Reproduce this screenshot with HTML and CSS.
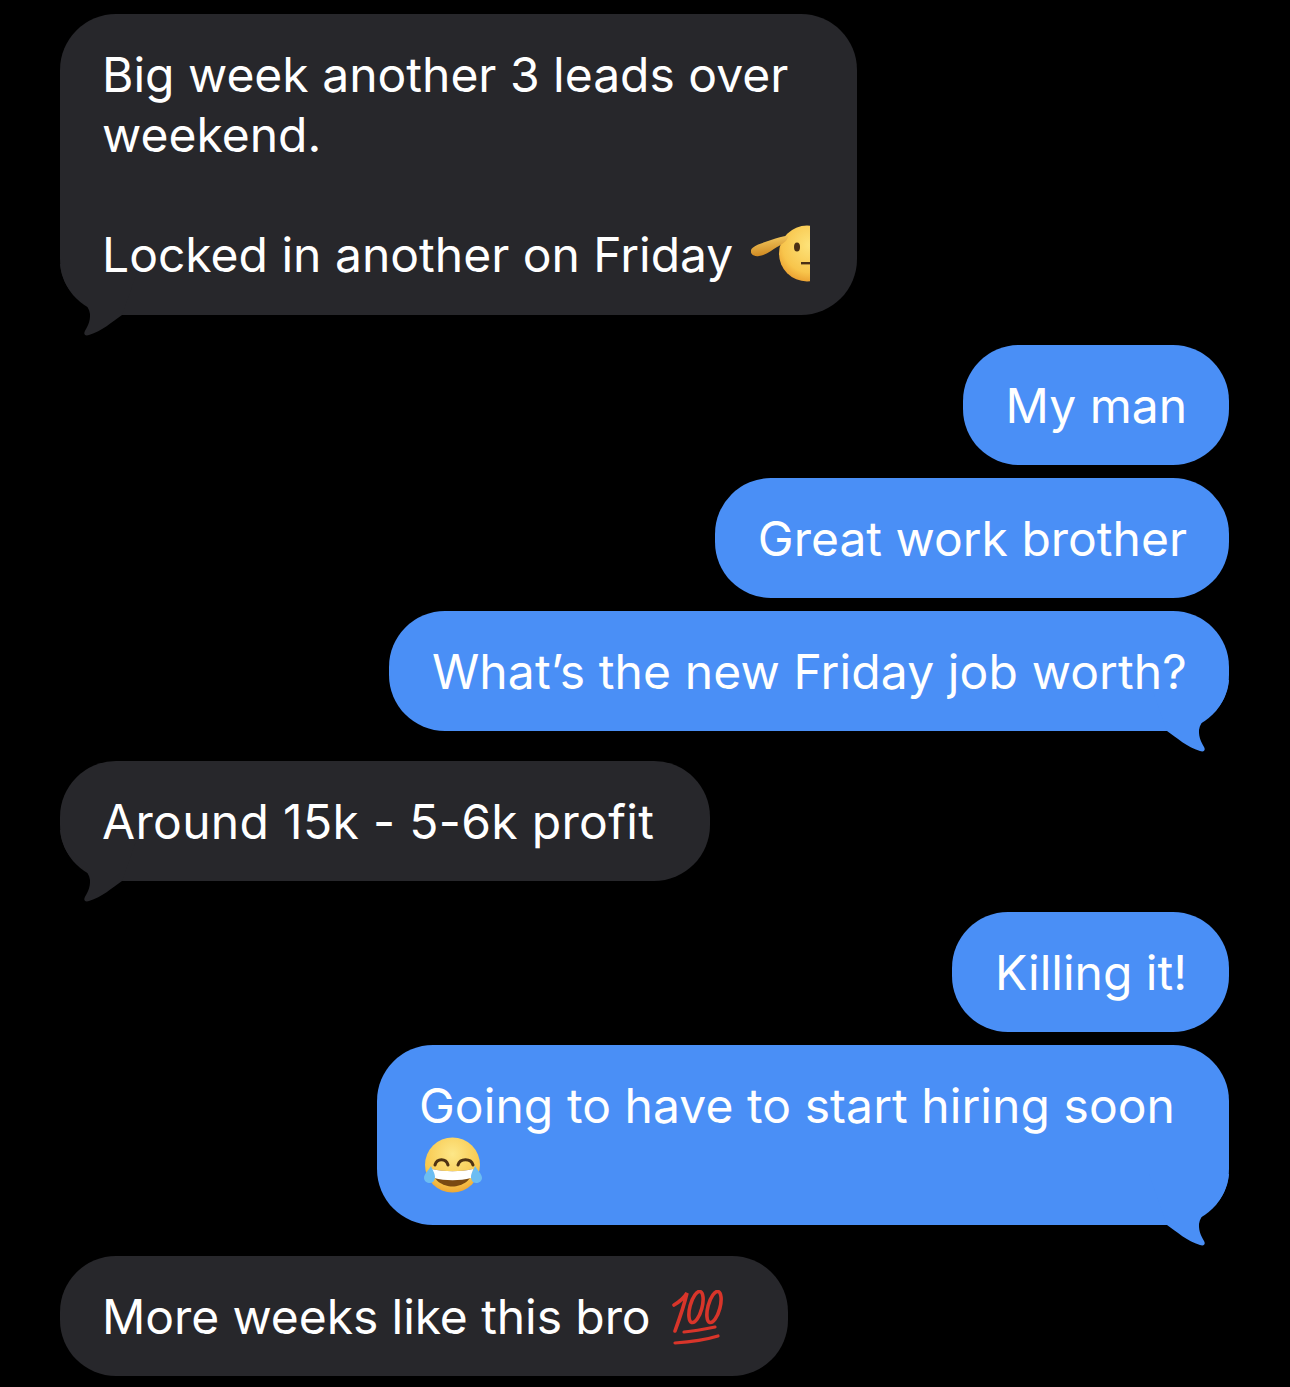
FILE: index.html
```html
<!DOCTYPE html>
<html lang="en">
<head>
  <meta charset="UTF-8" />
  <meta name="viewport" content="width=device-width, initial-scale=1.0" />
  <title>Messages</title>
  <link rel="stylesheet" href="styles.css">
</head>
<body>
  <div class="thread">

    <div class="bubble in first-bubble">
      Big week another 3 leads over<br>weekend.<br><br>
      <span class="salute-line">Locked in another on Friday
        <svg class="emoji salute" viewBox="0 0 59 58">
          <defs>
            <radialGradient id="saluteFace" cx="0.55" cy="0.35" r="0.7">
              <stop offset="0" stop-color="#fde37a"/>
              <stop offset="0.7" stop-color="#f8c54c"/>
              <stop offset="1" stop-color="#e89a2c"/>
            </radialGradient>
            <linearGradient id="saluteHand" x1="0" y1="0" x2="0.2" y2="1">
              <stop offset="0" stop-color="#f6cf66"/>
              <stop offset="1" stop-color="#d08a22"/>
            </linearGradient>
          </defs>
          <circle cx="56" cy="28.5" r="28" fill="url(#saluteFace)"/>
          <ellipse cx="46" cy="22" rx="3" ry="4.5" fill="#4a2f14"/>
          <rect x="50" y="37" width="9" height="2.4" fill="#4a2f14"/>
          <path d="M0 25 C2 20 12 18 20 15 C26 13 32 11 37 11 C37 15 33 18 28 21 C22 24 16 30 8 31 C3 32 -1 29 0 25 Z" fill="url(#saluteHand)"/>
        </svg>
      </span>
      <svg class="tail tail-in" viewBox="0 0 80 72"><path d="M0 0 C1 14 8 25 13 30 C18 35 29 40 30 50 C30.5 58 27 63 24.5 68 C23.5 71 26 72 29 71 C42 67 52 58 62 51 L80 0 Z"/></svg>
    </div>

    <div class="bubble out gap-large">My man</div>
    <div class="bubble out gap-small">Great work brother</div>
    <div class="bubble out gap-small friday-bubble">
      What’s the new Friday job worth?
      <svg class="tail tail-out" viewBox="0 0 80 72"><path d="M0 0 C1 14 8 25 13 30 C18 35 29 40 30 50 C30.5 58 27 63 24.5 68 C23.5 71 26 72 29 71 C42 67 52 58 62 51 L80 0 Z"/></svg>
    </div>

    <div class="bubble in gap-large profit-bubble">
      Around 15k - 5-6k profit
      <svg class="tail tail-in" viewBox="0 0 80 72"><path d="M0 0 C1 14 8 25 13 30 C18 35 29 40 30 50 C30.5 58 27 63 24.5 68 C23.5 71 26 72 29 71 C42 67 52 58 62 51 L80 0 Z"/></svg>
    </div>

    <div class="bubble out gap-wide">Killing it!</div>
    <div class="bubble out gap-small hiring-bubble">
      Going to have to start hiring soon<br>
      <svg class="emoji laugh" viewBox="0 0 58 58">
        <defs>
          <radialGradient id="laughFace" cx="0.5" cy="0.3" r="0.75">
            <stop offset="0" stop-color="#fde788"/>
            <stop offset="0.7" stop-color="#f8c84e"/>
            <stop offset="1" stop-color="#ec9f2e"/>
          </radialGradient>
        </defs>
        <circle cx="28.5" cy="29" r="27.5" fill="url(#laughFace)"/>
        <path d="M11 29 C13 22 22 22 24 29 M34 29 C36 22 47 22 49 29" fill="none" stroke="#4f3313" stroke-width="3" stroke-linecap="round"/>
        <path d="M8 33 C20 36 37 36 49 33 C49 44 38 50.5 28.5 50.5 C19 50.5 8 44 8 33 Z" fill="#7a4a12"/>
        <path d="M8 33 C20 36 37 36 49 33 C49 37 48 40 47 42 C36 45 21 45 10 42 C9 40 8 37 8 33 Z" fill="#fff"/>
        <path d="M7 30 C4 35 0 38 0 42 C0 45 3 47 6 47 C9 47 11 44 11 41 C11 37 8 33 7 30 Z" fill="#6cbdf2"/>
        <path d="M51 30 C54 35 58 38 58 42 C58 45 55 47 52 47 C49 47 47 44 47 41 C47 37 50 33 51 30 Z" fill="#6cbdf2"/>
      </svg>
      <svg class="tail tail-out" viewBox="0 0 80 72"><path d="M0 0 C1 14 8 25 13 30 C18 35 29 40 30 50 C30.5 58 27 63 24.5 68 C23.5 71 26 72 29 71 C42 67 52 58 62 51 L80 0 Z"/></svg>
    </div>

    <div class="bubble in gap-wide last-bubble">
      More weeks like this bro
      <svg class="emoji hundred" viewBox="0 0 54 56">
        <g fill="none" stroke="#d8352a" stroke-linecap="round">
          <path d="M2 15 C7 12 12 8 15 3 C12 16 7 30 3 41" stroke-width="3.6"/>
          <ellipse cx="24" cy="17" rx="6" ry="16" transform="rotate(15 24 17)" stroke-width="3.6"/>
          <ellipse cx="42" cy="17" rx="6" ry="16" transform="rotate(15 42 17)" stroke-width="3.6"/>
          <path d="M12 42 C22 41 33 39 43 37" stroke-width="3.2"/>
          <path d="M3 53 C18 52 33 50 46 46" stroke-width="3.2"/>
        </g>
      </svg>
    </div>

  </div>
</body>
</html>
```

FILE: styles.css
```css
* {
  box-sizing: border-box;
}

body {
  margin: 0;
  background-color: #000;
  font-family: Inter, "Liberation Sans", sans-serif;
}

.thread {
  display: flex;
  flex-direction: column;
  align-items: flex-start;
  height: 1387px;
  padding: 14px 61px 0 60px;
  overflow: hidden;
}

.bubble {
  position: relative;
  z-index: 0;
  padding: 31px 42px 29px 43px;
  border-radius: 56px;
  font-size: 48px;
  line-height: 60px;
  color: #fff;
  white-space: nowrap;
}

.in {
  padding-left: 42px;
  background-color: #27272b;
  fill: #27272b;
}

.out {
  align-self: flex-end;
  background-color: #4a8ff6;
  fill: #4a8ff6;
}

.gap-large { margin-top: 30px; }
.gap-wide { margin-top: 31px; }
.gap-small { margin-top: 13px; }

.first-bubble {
  width: 797px;
  padding-bottom: 30px;
}

.friday-bubble { letter-spacing: 0.12px; }

.profit-bubble {
  width: 650px;
  letter-spacing: 0.33px;
}

.hiring-bubble {
  width: 852px;
  padding-left: 42px;
  letter-spacing: 0.06px;
}

.last-bubble {
  width: 728px;
  letter-spacing: -0.08px;
}

/* sits under the text but over the bubble background */
.tail {
  position: absolute;
  z-index: -1;
  bottom: -21px;
  width: 80px;
  height: 72px;
}

.tail-in { left: 0; }

.tail-out {
  right: 0;
  transform: scaleX(-1);
}

.emoji {
  display: inline-block;
}

.salute {
  width: 59px;
  height: 58px;
  margin-left: 4px;
  vertical-align: -11px;
}

.laugh {
  width: 58px;
  height: 58px;
  margin-left: 5px;
  vertical-align: top;
}

.hundred {
  width: 54px;
  height: 56px;
  margin-left: 8px;
  vertical-align: -12px;
}
```
